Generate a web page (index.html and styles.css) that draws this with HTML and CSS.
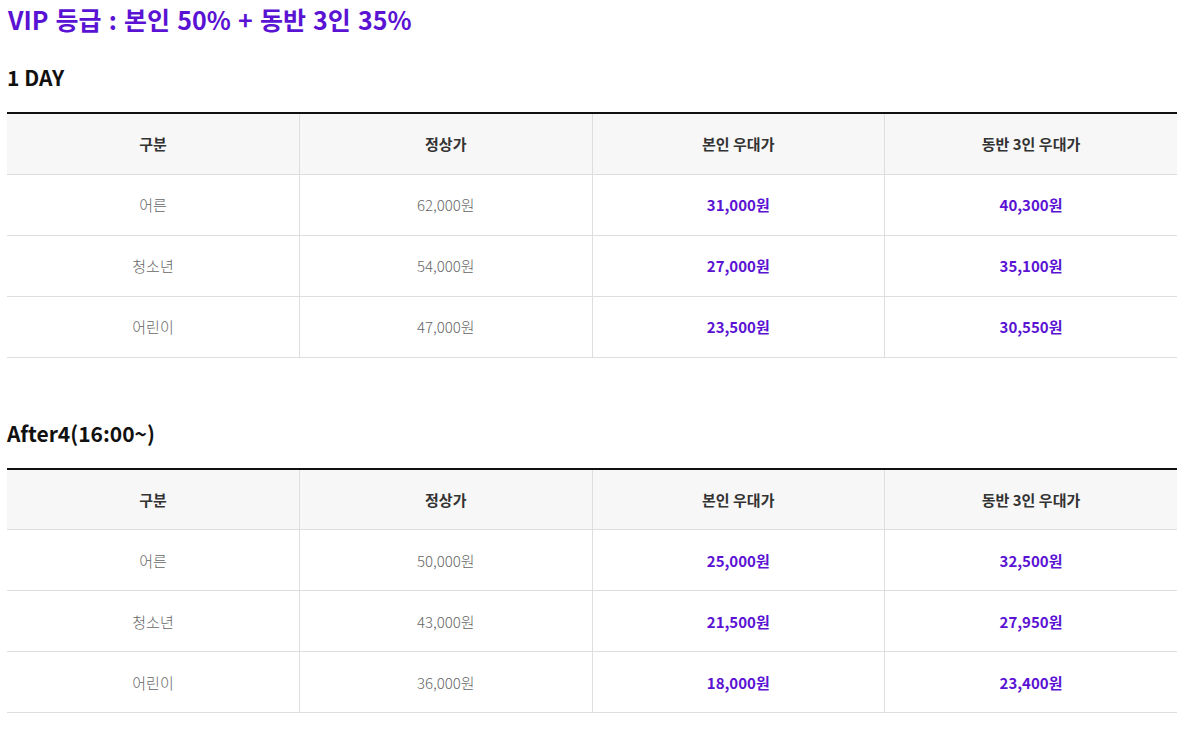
FILE: index.html
```html
<!DOCTYPE html>
<html>
<head>
<meta charset="utf-8">
<link rel="stylesheet" href="styles.css">
</head>
<body>
<div class="page">
  <h2 class="grade-title">VIP 등급 : 본인 50% + 동반 3인 35%</h2>

  <section class="price-section">
    <h3 class="section-title">1 DAY</h3>
    <table class="price-table">
      <colgroup><col><col><col><col></colgroup>
      <thead>
        <tr><th>구분</th><th>정상가</th><th>본인 우대가</th><th>동반 3인 우대가</th></tr>
      </thead>
      <tbody>
        <tr><td>어른</td><td>62,000원</td><td class="deal">31,000원</td><td class="deal">40,300원</td></tr>
        <tr><td>청소년</td><td>54,000원</td><td class="deal">27,000원</td><td class="deal">35,100원</td></tr>
        <tr><td>어린이</td><td>47,000원</td><td class="deal">23,500원</td><td class="deal">30,550원</td></tr>
      </tbody>
    </table>
  </section>

  <section class="price-section">
    <h3 class="section-title">After4(16:00~)</h3>
    <table class="price-table">
      <colgroup><col><col><col><col></colgroup>
      <thead>
        <tr><th>구분</th><th>정상가</th><th>본인 우대가</th><th>동반 3인 우대가</th></tr>
      </thead>
      <tbody>
        <tr><td>어른</td><td>50,000원</td><td class="deal">25,000원</td><td class="deal">32,500원</td></tr>
        <tr><td>청소년</td><td>43,000원</td><td class="deal">21,500원</td><td class="deal">27,950원</td></tr>
        <tr><td>어린이</td><td>36,000원</td><td class="deal">18,000원</td><td class="deal">23,400원</td></tr>
      </tbody>
    </table>
  </section>
</div>
</body>
</html>
```

FILE: styles.css
```css
* { box-sizing: border-box; }
html, body { margin: 0; padding: 0; background: #fff; }
body {
  font-family: "Noto Sans CJK KR", "Noto Sans", sans-serif;
  color: #333;
}
.page {
  padding: 2px 5px 20px 7px;
}
.grade-title {
  margin: 0;
  font-size: 25px;
  line-height: 34px;
  font-weight: 700;
  color: #5a12d3;
  padding-left: 1px;
  word-spacing: 1.5px;
}
.price-section {
  margin-top: 27px;
}
.price-section + .price-section {
  margin-top: 61px;
}
.section-title {
  margin: 0 0 21px;
  font-size: 21px;
  line-height: 28px;
  font-weight: 700;
  color: #111;
}
.price-table {
  width: 100%;
  border-collapse: collapse;
  table-layout: fixed;
  border-top: 2px solid #111;
}
.price-table col { width: 25%; }
.price-table th,
.price-table td {
  height: 61px;
  padding: 0;
  text-align: center;
  vertical-align: middle;
  font-size: 15px;
  border-bottom: 1px solid #dedede;
  border-left: 1px solid #dedede;
}
.price-table th:first-child,
.price-table td:first-child { border-left: 0; }
.price-table th {
  background: #f7f7f7;
  font-weight: 700;
  color: #333;
}
.price-table td {
  font-weight: 300;
  color: #666;
}
.price-table td.deal {
  font-weight: 700;
  color: #5a12d3;
}
```
